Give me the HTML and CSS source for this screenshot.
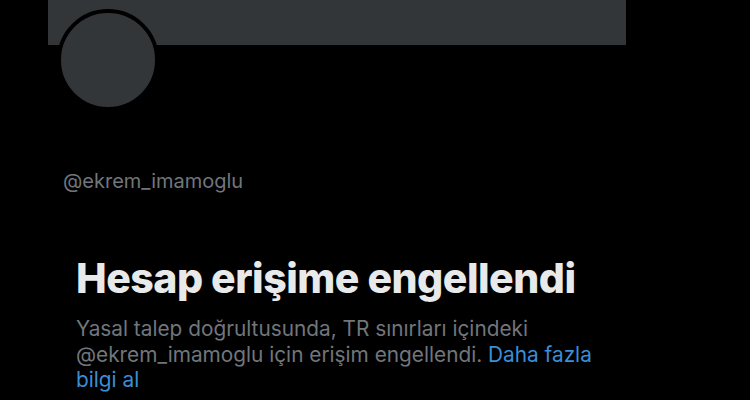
FILE: index.html
```html
<!DOCTYPE html>
<html lang="tr">
<head>
    <meta charset="UTF-8">
    <meta name="viewport" content="width=device-width, initial-scale=1.0">
    <title>@ekrem_imamoglu</title>
    <link rel="stylesheet" href="styles.css">
</head>
<body>
    <div class="profile">
        <div class="banner"></div>
        <div class="avatar"></div>
        <p class="handle">@ekrem_imamoglu</p>

        <div class="withheld">
            <h1>Hesap erişime engellendi</h1>
            <p>Yasal talep doğrultusunda, TR sınırları içindeki<br>@ekrem_imamoglu için erişim engellendi. <a href="#">Daha fazla bilgi al</a></p>
        </div>
    </div>
</body>
</html>
```

FILE: styles.css
```css
body {
    background: #000;
    margin: 0;
    font-family: Inter, "Noto Sans", sans-serif;
    height: 400px;
    overflow: hidden;
}

.banner {
    margin-left: 48px;
    width: 578px;
    height: 45px;
    background: #333639;
}

.avatar {
    width: 94px;
    height: 94px;
    margin: -36px 0 0 57px;
    border: 4px solid #000;
    border-radius: 50%;
    background: #333639;
}

.handle {
    margin: 58px 0 0 63px;
    color: #71767b;
    font-size: 20px;
    line-height: 24px;
}

.withheld {
    margin: 61px 0 0 76px;
    width: 560px;
}

.withheld h1 {
    margin: 0;
    color: #e7e9ea;
    font-size: 41px;
    font-weight: 800;
    line-height: 48px;
    letter-spacing: -0.5px;
}

.withheld p {
    margin: 14px 0 0;
    color: #71767b;
    font-size: 20.8px;
    line-height: 25.5px;
}

.withheld a {
    color: #3a8fd8;
    text-decoration: none;
}
```
